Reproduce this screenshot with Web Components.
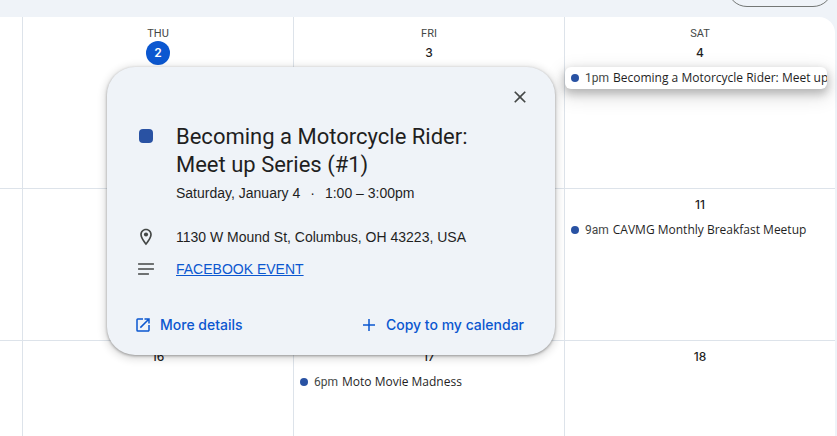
<!DOCTYPE html>
<html lang="en">
<head>
<meta charset="utf-8">
<title>Calendar</title>
<style>
  body { margin: 0; background: #eff3f8; color: #1f1f1f; font-family: Inter, sans-serif; overflow: hidden; }
</style>
</head>
<body>
<calendar-app></calendar-app>
<script>
const define = (name, html, setup) => {
  const template = document.createElement('template');
  template.innerHTML = html;
  customElements.define(name, class extends HTMLElement {
    connectedCallback() {
      if (this.shadowRoot) return;
      const root = this.attachShadow({ mode: 'open' });
      root.append(template.content.cloneNode(true));
      if (setup) setup(this, root);
    }
  });
};

define('calendar-toolbar', `
  <style>
    :host { display: flex; justify-content: flex-end; align-items: flex-end; height: 17px; box-sizing: border-box; padding: 0 4px 10px; overflow: hidden; }
    button { flex: none; width: 106px; height: 40px; border: 1px solid #747775; border-radius: 20px; background: none; }
  </style>
  <button type="button" aria-label="View"></button>`);

define('calendar-event', `
  <style>
    :host { display: block; }
    button { display: flex; align-items: center; width: 100%; height: 22px; padding: 0 0 0 6px; border: 0; border-radius: 4px; background: none; font: 12px/22px "Open Sans", sans-serif; color: #1f1f1f; text-align: left; white-space: nowrap; overflow: hidden; }
    :host([raised]) button { background: #fff; border-radius: 6px; box-shadow: 0 4px 8px 1px rgba(0,0,0,.22), 0 6px 18px 4px rgba(0,0,0,.1); }
    i { flex: none; width: 8px; height: 8px; border-radius: 50%; background: #2952a3; margin-right: 6px; }
    .time { font-family: Roboto, sans-serif; color: #444746; margin-right: 4px; }
    .name { font-weight: 500; }
  </style>
  <button type="button"><i></i><span class="time"></span><span class="name"><slot></slot></span></button>`,
  (host, root) => { root.querySelector('.time').textContent = host.getAttribute('time'); });

define('calendar-day', `
  <style>
    :host { display: flex; flex-direction: column; min-width: 0; box-sizing: border-box; border-left: 1px solid #dde3ea; border-bottom: 1px solid #dde3ea; padding: 4px 8px 0 0; }
    :host([weekday]) { padding-top: 9px; }
    header { display: flex; flex-direction: column; align-items: center; margin-right: -8px; }
    .weekday { font: 400 11px/16px Roboto, sans-serif; color: #444746; }
    .weekday:empty { display: none; }
    .date { width: 24px; height: 24px; border-radius: 50%; font-size: 12px; line-height: 24px; font-weight: 500; text-align: center; }
    :host([weekday]) .date { margin-top: -1px; }
    :host([today]) .date { background: #0b57d0; color: #fff; font-weight: 600; }
    .events { margin-top: 2px; }
  </style>
  <header><span class="weekday"></span><span class="date"></span></header>
  <div class="events"><slot></slot></div>`,
  (host, root) => {
    root.querySelector('.weekday').textContent = host.getAttribute('weekday') || '';
    root.querySelector('.date').textContent = host.getAttribute('date') || '';
  });

define('calendar-grid', `
  <style>
    :host { display: grid; grid-template-columns: 22px repeat(3, minmax(0, 1fr)); grid-template-rows: 172px 152px 152px; margin-right: 2px; background: #fff; border-radius: 0 16px 0 0; }
    .edge { border-bottom: 1px solid #dde3ea; }
  </style>
  <div class="edge"></div>
  <calendar-day weekday="THU" date="2" today></calendar-day>
  <calendar-day weekday="FRI" date="3"></calendar-day>
  <calendar-day weekday="SAT" date="4"><calendar-event time="1pm" raised>Becoming a Motorcycle Rider: Meet up</calendar-event></calendar-day>
  <div class="edge"></div>
  <calendar-day></calendar-day>
  <calendar-day></calendar-day>
  <calendar-day date="11"><calendar-event time="9am">CAVMG Monthly Breakfast Meetup</calendar-event></calendar-day>
  <div class="edge"></div>
  <calendar-day date="16"></calendar-day>
  <calendar-day date="17"><calendar-event time="6pm">Moto Movie Madness</calendar-event></calendar-day>
  <calendar-day date="18"></calendar-day>`);

define('detail-row', `
  <style>
    :host { display: grid; grid-template-columns: 20px 1fr; column-gap: 20px; align-items: center; min-height: 32px; }
    :host([top]) { align-items: start; }
    .icon { display: flex; justify-content: center; }
  </style>
  <div class="icon"><slot name="icon"></slot></div><div><slot></slot></div>`);

define('event-popup', `
  <style>
    :host { display: flex; flex-direction: column; box-sizing: border-box; width: 448px; padding: 12px 20px 14px 29px; border-radius: 28px; background: #eff3f8; box-shadow: 0 1px 3px rgba(0,0,0,.35), 0 2px 8px 2px rgba(0,0,0,.14); font: 14px/20px "Liberation Sans", Arial, sans-serif; }
    svg { display: block; fill: #444746; }
    button, .more { display: flex; align-items: center; border: 0; padding: 0; background: none; }
    .close { align-self: flex-end; justify-content: center; width: 30px; height: 36px; }
    .swatch { width: 14px; height: 14px; margin-top: 14px; border-radius: 4px; background: #2952a3; }
    h2 { margin: 8px 0 4px; font: 400 22px/28px Roboto, sans-serif; }
    .when { display: flex; gap: 10px; }
    .about { margin-bottom: 24px; }
    .place { margin-top: 18px; }
    a { color: #0b57d0; }
    footer { display: flex; justify-content: space-between; align-items: center; height: 32px; padding: 0 11px 0 0; margin-left: -2px; }
    footer button, .more { gap: 8px; color: #0b57d0; font: 500 14px/20px Inter, sans-serif; text-decoration: none; }
    footer svg { fill: #0b57d0; }
  </style>
  <button class="close" type="button" aria-label="Close"><svg width="20" height="20" viewBox="0 0 24 24"><path d="M19 6.41 17.59 5 12 10.59 6.41 5 5 6.41 10.59 12 5 17.59 6.41 19 12 13.41 17.59 19 19 17.59 13.41 12z"/></svg></button>
  <detail-row top>
    <div slot="icon" class="swatch"></div>
    <h2>Becoming a Motorcycle Rider:<br>Meet up Series (#1)</h2>
    <div class="when"><span>Saturday, January 4</span><span>·</span><span>1:00 – 3:00pm</span></div>
  </detail-row>
  <detail-row class="place">
    <svg slot="icon" width="20" height="20" viewBox="0 0 24 24"><path d="M12 2C8.13 2 5 5.13 5 9c0 5.25 7 13 7 13s7-7.75 7-13c0-3.87-3.13-7-7-7zM7 9c0-2.76 2.24-5 5-5s5 2.24 5 5c0 2.88-2.88 7.19-5 9.88C9.92 16.21 7 11.85 7 9z"/><circle cx="12" cy="9" r="2.5"/></svg>
    <span>1130 W Mound St, Columbus, OH 43223, USA</span>
  </detail-row>
  <detail-row class="about">
    <svg slot="icon" width="20" height="20" viewBox="0 0 24 24"><path d="M2.5 5h19v2h-19zM2.5 11h19v2h-19zM2.5 17h13v2h-13z"/></svg>
    <a href="#event">FACEBOOK EVENT</a>
  </detail-row>
  <footer>
    <a class="more" href="#details"><svg width="18" height="18" viewBox="0 0 24 24"><path d="M19 19H5V5h7V3H5a2 2 0 0 0-2 2v14a2 2 0 0 0 2 2h14c1.1 0 2-.9 2-2v-7h-2v7zM14 3v2h3.59l-9.83 9.83 1.41 1.41L19 6.41V10h2V3h-7z"/></svg>More details</a>
    <button type="button"><svg width="18" height="18" viewBox="0 0 24 24"><path d="M20 13h-7v7h-2v-7H4v-2h7V4h2v7h7v2z"/></svg>Copy to my calendar</button>
  </footer>`);

define('calendar-app', `
  <style>
    :host { display: block; position: relative; height: 100vh; overflow: hidden; }
    event-popup { position: absolute; left: 107px; top: 67px; }
  </style>
  <calendar-toolbar></calendar-toolbar>
  <calendar-grid></calendar-grid>
  <event-popup></event-popup>`);
</script>
</body>
</html>
